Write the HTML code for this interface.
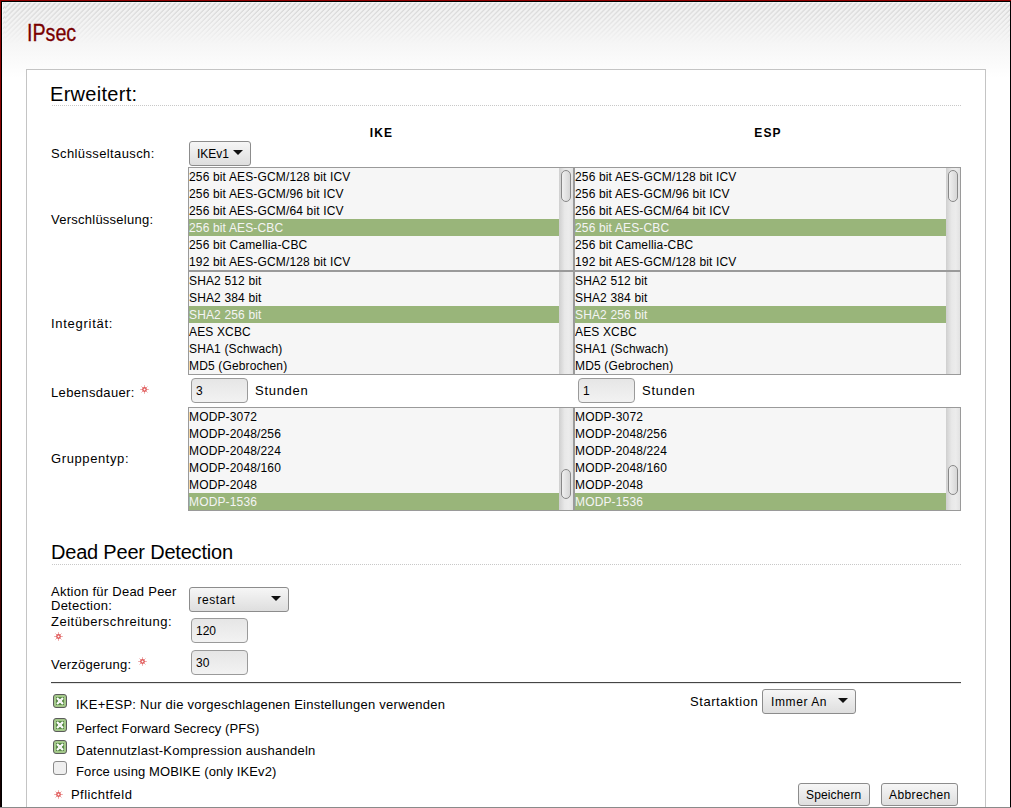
<!DOCTYPE html>
<html><head><meta charset="utf-8">
<style>
html,body{margin:0;padding:0;}
body{width:1011px;height:808px;overflow:hidden;position:relative;background:#fff;font-family:"Liberation Sans",sans-serif;color:#000;}
.abs{position:absolute;}
#frameL{left:0;top:0;width:1px;height:808px;background:linear-gradient(#8e0000,#7a0000 50%,#100000 100%);}
#frameL2{left:1px;top:1px;width:1px;height:807px;background:#000;}
#frameT{left:0;top:0;width:1011px;height:1px;background:#8e0000;}
#frameT2{left:1px;top:1px;width:1009px;height:1px;background:#000;}
#frameR{left:1010px;top:1px;width:1px;height:807px;background:#000;}
#frameB{left:0;top:807px;width:1011px;height:1px;background:#8a8a8a;}
#head{left:2px;top:2px;width:1008px;height:80px;
 background:
  linear-gradient(rgba(246,246,246,0) 0px, rgba(246,246,246,0.5) 22px, #f6f6f6 42px, #fff 76px),
  repeating-linear-gradient(-45deg, #d2d2d2 0px, #dcdcdc 0.7px, #f0f0f0 1.5px, #f0f0f0 2.8px, #d2d2d2 3.54px);
 background-position:0 0, 3px 0;
}
#title{left:26.5px;top:19px;font-size:23px;color:#7a0000;line-height:28px;transform:scaleX(0.855);transform-origin:0 0;-webkit-text-stroke:0.3px #7a0000;}
#box{left:26px;top:69px;width:958px;height:800px;border:1px solid #c4c4c4;background:#fff;}
.h2{font-size:20px;line-height:24px;}
.dots{height:1px;background:repeating-linear-gradient(90deg,#c8c8c8 0 1px,transparent 1px 2px);}
.lbl{font-size:13px;line-height:14px;letter-spacing:.25px;}
.bold{font-weight:bold;font-size:12px;letter-spacing:1.1px;text-indent:1px;}
.lb{border:1px solid #9a9a9a;background:#f6f6f6;overflow:hidden;}
.lb .o{height:17px;line-height:19px;font-size:12px;padding-left:0px;white-space:nowrap;letter-spacing:.15px;}
.lb .sel{background:#99b57a;color:#f4f4f4;}
.track{position:absolute;top:0;right:0;width:14px;bottom:0;background:linear-gradient(90deg,#cfcfcf,#e8e8e8 40%,#ececec 70%,#e2e2e2);}
.thumb{position:absolute;left:2px;width:8px;border:1px solid #888;border-radius:5px;background:linear-gradient(90deg,#f0f0f0,#d6d6d6);}
.btn{border:1px solid #8c8c8c;border-radius:3px;background:linear-gradient(#f6f6f6,#dedede);box-sizing:border-box;font-size:12px;}
.inp{border:1px solid #9a9a9a;border-radius:4px;background:linear-gradient(#e6e6e6,#f2f2f2);box-sizing:border-box;font-size:12px;}
.caret{position:absolute;width:0;height:0;border-left:5px solid transparent;border-right:5px solid transparent;border-top:5px solid #111;}
</style></head><body>
<div id="head" class="abs"></div>
<div id="frameL" class="abs"></div>
<div id="frameT" class="abs"></div>
<div id="frameL2" class="abs"></div>
<div id="frameT2" class="abs"></div>
<div id="frameR" class="abs"></div>
<div class="abs" style="left:2px;top:2px;width:1008px;height:1px;background:rgba(255,255,255,.55);"></div>
<div class="abs" style="left:2px;top:2px;width:1px;height:70px;background:linear-gradient(rgba(255,255,255,.9),rgba(255,255,255,0));"></div>
<div id="title" class="abs">IPsec</div>
<div id="box" class="abs"></div>

<div class="abs h2" style="left:50px;top:82px;letter-spacing:.3px;">Erweitert:</div>
<div class="abs dots" style="left:52px;top:105px;width:909px;"></div>

<div class="abs bold" style="left:188px;width:386px;top:126px;text-align:center;">IKE</div>
<div class="abs bold" style="left:574px;width:387px;top:126px;text-align:center;">ESP</div>

<div class="abs lbl" style="left:51px;top:147px;letter-spacing:.38px;">Schlüsseltausch:</div>
<div class="abs btn" style="left:189px;top:141px;width:62px;height:25px;"><span class="abs" style="left:7px;top:5px;">IKEv1</span><span class="caret" style="left:43px;top:8px;"></span></div>

<div class="abs lbl" style="left:51px;top:213px;">Verschlüsselung:</div>
<div class="abs lbl" style="left:51px;top:317px;letter-spacing:.72px;">Integrität:</div>
<div class="abs lbl" style="left:51px;top:386px;letter-spacing:.35px;">Lebensdauer:</div>
<div class="abs lbl" style="left:51px;top:452px;letter-spacing:.6px;">Gruppentyp:</div>

<!-- listboxes -->
<div class="abs lb" style="left:188px;top:167px;width:384px;height:102px;">
 <div class="o">256 bit AES-GCM/128 bit ICV</div><div class="o">256 bit AES-GCM/96 bit ICV</div><div class="o">256 bit AES-GCM/64 bit ICV</div><div class="o sel">256 bit AES-CBC</div><div class="o">256 bit Camellia-CBC</div><div class="o">192 bit AES-GCM/128 bit ICV</div>
 <div class="track"><div class="thumb" style="top:2px;height:30px;"></div></div>
</div>
<div class="abs lb" style="left:574px;top:167px;width:385px;height:102px;">
 <div class="o">256 bit AES-GCM/128 bit ICV</div><div class="o">256 bit AES-GCM/96 bit ICV</div><div class="o">256 bit AES-GCM/64 bit ICV</div><div class="o sel">256 bit AES-CBC</div><div class="o">256 bit Camellia-CBC</div><div class="o">192 bit AES-GCM/128 bit ICV</div>
 <div class="track"><div class="thumb" style="top:2px;height:30px;"></div></div>
</div>
<div class="abs lb" style="left:188px;top:271px;width:384px;height:102px;">
 <div class="o">SHA2 512 bit</div><div class="o">SHA2 384 bit</div><div class="o sel">SHA2 256 bit</div><div class="o">AES XCBC</div><div class="o">SHA1 (Schwach)</div><div class="o">MD5 (Gebrochen)</div>
 <div class="track"></div>
</div>
<div class="abs lb" style="left:574px;top:271px;width:385px;height:102px;">
 <div class="o">SHA2 512 bit</div><div class="o">SHA2 384 bit</div><div class="o sel">SHA2 256 bit</div><div class="o">AES XCBC</div><div class="o">SHA1 (Schwach)</div><div class="o">MD5 (Gebrochen)</div>
 <div class="track"></div>
</div>
<div class="abs inp" style="left:191px;top:378px;width:57px;height:25px;"><span class="abs" style="left:4px;top:5px;">3</span></div>
<div class="abs lbl" style="left:255px;top:384px;letter-spacing:.72px;">Stunden</div>
<div class="abs inp" style="left:578px;top:378px;width:57px;height:25px;"><span class="abs" style="left:4px;top:5px;">1</span></div>
<div class="abs lbl" style="left:642px;top:384px;letter-spacing:.72px;">Stunden</div>

<div class="abs lb" style="left:188px;top:407px;width:384px;height:102px;">
 <div class="o">MODP-3072</div><div class="o">MODP-2048/256</div><div class="o">MODP-2048/224</div><div class="o">MODP-2048/160</div><div class="o">MODP-2048</div><div class="o sel">MODP-1536</div>
 <div class="track"><div class="thumb" style="top:61px;height:28px;"></div></div>
</div>
<div class="abs lb" style="left:574px;top:407px;width:385px;height:102px;">
 <div class="o">MODP-3072</div><div class="o">MODP-2048/256</div><div class="o">MODP-2048/224</div><div class="o">MODP-2048/160</div><div class="o">MODP-2048</div><div class="o sel">MODP-1536</div>
 <div class="track"><div class="thumb" style="top:57px;height:28px;"></div></div>
</div>

<div class="abs h2" style="left:51px;top:540px;letter-spacing:-.2px;">Dead Peer Detection</div>
<div class="abs dots" style="left:52px;top:564px;width:909px;"></div>

<div class="abs lbl" style="left:51px;top:585px;">Aktion für Dead Peer<br>Detection:</div>
<div class="abs btn" style="left:189px;top:587px;width:100px;height:25px;"><span class="abs" style="left:7.5px;top:5px;letter-spacing:.55px;">restart</span><span class="caret" style="left:81px;top:8px;"></span></div>
<div class="abs lbl" style="left:51px;top:615px;letter-spacing:.52px;">Zeitüberschreitung:</div>
<div class="abs inp" style="left:191px;top:618px;width:57px;height:25px;"><span class="abs" style="left:4px;top:5px;">120</span></div>
<div class="abs lbl" style="left:51px;top:658px;">Verzögerung:</div>
<div class="abs inp" style="left:191px;top:650px;width:57px;height:25px;"><span class="abs" style="left:4px;top:5px;">30</span></div>

<div class="abs" style="left:51px;top:682px;width:910px;height:1px;background:#454545;box-shadow:0 1px 0 #e6e6e6;"></div>

<div class="abs lbl" style="left:76px;top:698px;">IKE+ESP: Nur die vorgeschlagenen Einstellungen verwenden</div>
<div class="abs lbl" style="left:76px;top:722px;letter-spacing:.1px;">Perfect Forward Secrecy (PFS)</div>
<div class="abs lbl" style="left:76px;top:744px;">Datennutzlast-Kompression aushandeln</div>
<div class="abs lbl" style="left:76px;top:765px;letter-spacing:.13px;">Force using MOBIKE (only IKEv2)</div>
<div class="abs lbl" style="left:71px;top:788px;letter-spacing:.45px;">Pflichtfeld</div>

<div class="abs lbl" style="left:690px;top:695px;letter-spacing:.55px;">Startaktion</div>
<div class="abs btn" style="left:762px;top:689px;width:94px;height:25px;"><span class="abs" style="left:8px;top:5px;letter-spacing:.6px;">Immer An</span><span class="caret" style="left:75px;top:8px;"></span></div>

<div class="abs btn" style="left:798px;top:783px;width:72px;height:23px;"><span class="abs" style="left:7px;top:4px;letter-spacing:.15px;">Speichern</span></div>
<div class="abs btn" style="left:881px;top:783px;width:77px;height:23px;"><span class="abs" style="left:7px;top:4px;letter-spacing:.4px;">Abbrechen</span></div>

<svg class="abs" style="left:139px;top:384px;" width="11" height="11" viewBox="0 0 11 11"><g stroke="#e06a6a" stroke-width="0.9" opacity="0.65"><line x1="5.5" y1="1.2" x2="5.5" y2="9.8"/><line x1="1.2" y1="5.5" x2="9.8" y2="5.5"/><line x1="2.5" y1="2.5" x2="8.5" y2="8.5"/><line x1="8.5" y1="2.5" x2="2.5" y2="8.5"/></g><circle cx="5.5" cy="5.5" r="1.7" fill="#fff" stroke="#e05555" stroke-width="1.4"/></svg>
<svg class="abs" style="left:53px;top:631px;" width="11" height="11" viewBox="0 0 11 11"><g stroke="#e06a6a" stroke-width="0.9" opacity="0.65"><line x1="5.5" y1="1.2" x2="5.5" y2="9.8"/><line x1="1.2" y1="5.5" x2="9.8" y2="5.5"/><line x1="2.5" y1="2.5" x2="8.5" y2="8.5"/><line x1="8.5" y1="2.5" x2="2.5" y2="8.5"/></g><circle cx="5.5" cy="5.5" r="1.7" fill="#fff" stroke="#e05555" stroke-width="1.4"/></svg>
<svg class="abs" style="left:137px;top:656px;" width="11" height="11" viewBox="0 0 11 11"><g stroke="#e06a6a" stroke-width="0.9" opacity="0.65"><line x1="5.5" y1="1.2" x2="5.5" y2="9.8"/><line x1="1.2" y1="5.5" x2="9.8" y2="5.5"/><line x1="2.5" y1="2.5" x2="8.5" y2="8.5"/><line x1="8.5" y1="2.5" x2="2.5" y2="8.5"/></g><circle cx="5.5" cy="5.5" r="1.7" fill="#fff" stroke="#e05555" stroke-width="1.4"/></svg>
<svg class="abs" style="left:53px;top:789px;" width="11" height="11" viewBox="0 0 11 11"><g stroke="#e06a6a" stroke-width="0.9" opacity="0.65"><line x1="5.5" y1="1.2" x2="5.5" y2="9.8"/><line x1="1.2" y1="5.5" x2="9.8" y2="5.5"/><line x1="2.5" y1="2.5" x2="8.5" y2="8.5"/><line x1="8.5" y1="2.5" x2="2.5" y2="8.5"/></g><circle cx="5.5" cy="5.5" r="1.7" fill="#fff" stroke="#e05555" stroke-width="1.4"/></svg>
<svg class="abs" style="left:53px;top:694px;" width="14" height="14" viewBox="0 0 14 14"><rect x="0.5" y="0.5" width="13" height="13" rx="2.5" fill="#a4c98a" stroke="#5c5c5c"/><rect x="3" y="3" width="8" height="8" fill="#5b8a48"/><path d="M4 4 L10 10 M10 4 L4 10" stroke="#fff" stroke-width="2.2"/><rect x="5" y="5" width="4" height="4" fill="#f4f4f4"/></svg>
<svg class="abs" style="left:53px;top:718px;" width="14" height="14" viewBox="0 0 14 14"><rect x="0.5" y="0.5" width="13" height="13" rx="2.5" fill="#a4c98a" stroke="#5c5c5c"/><rect x="3" y="3" width="8" height="8" fill="#5b8a48"/><path d="M4 4 L10 10 M10 4 L4 10" stroke="#fff" stroke-width="2.2"/><rect x="5" y="5" width="4" height="4" fill="#f4f4f4"/></svg>
<svg class="abs" style="left:53px;top:740px;" width="14" height="14" viewBox="0 0 14 14"><rect x="0.5" y="0.5" width="13" height="13" rx="2.5" fill="#a4c98a" stroke="#5c5c5c"/><rect x="3" y="3" width="8" height="8" fill="#5b8a48"/><path d="M4 4 L10 10 M10 4 L4 10" stroke="#fff" stroke-width="2.2"/><rect x="5" y="5" width="4" height="4" fill="#f4f4f4"/></svg>
<svg class="abs" style="left:53px;top:761px;" width="14" height="14" viewBox="0 0 14 14"><rect x="0.5" y="0.5" width="13" height="13" rx="2.5" fill="#efefef" stroke="#8a8a8a"/></svg>
<div id="frameB" class="abs"></div>
</body></html>
